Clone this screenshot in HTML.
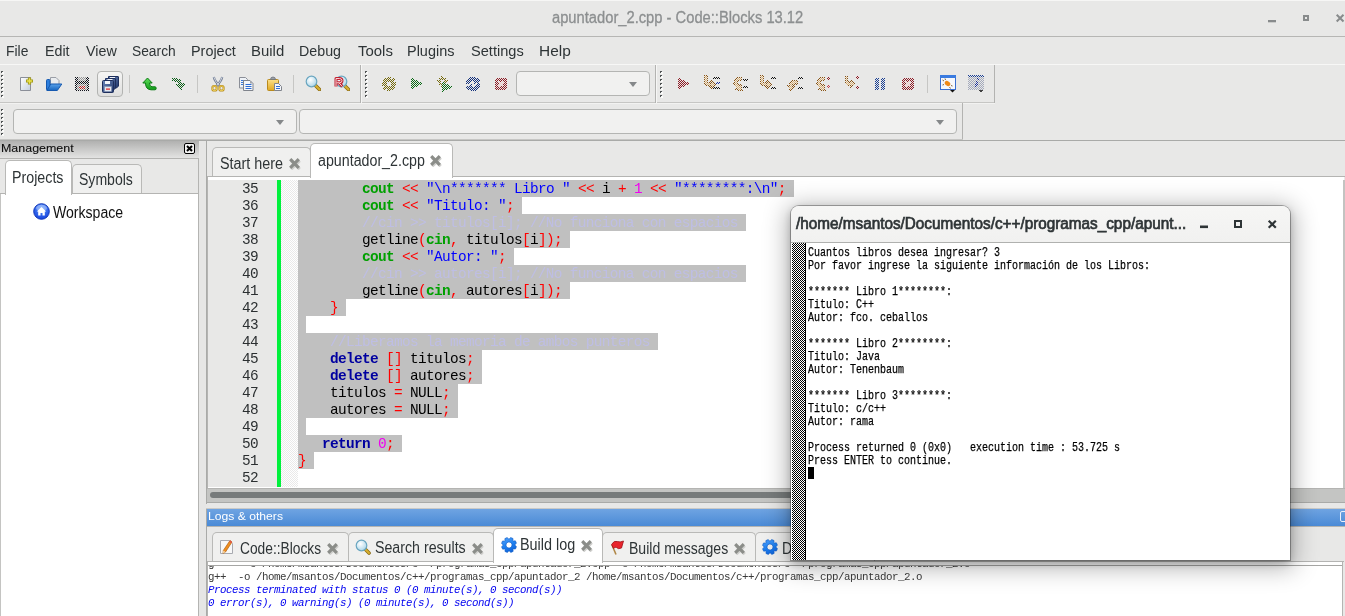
<!DOCTYPE html>
<html>
<head>
<meta charset="utf-8">
<title>apuntador_2.cpp - Code::Blocks 13.12</title>
<style>
html,body{margin:0;padding:0;}
body{width:1345px;height:616px;overflow:hidden;position:relative;background:#e8e8e7;font-family:"Liberation Sans",sans-serif;font-size:14.5px;color:#2e3436;}
.abs{position:absolute;}
.t{position:absolute;white-space:pre;line-height:1;}
/* title bar */
#titlebar{left:0;top:0;width:1345px;height:36px;background:#e8e8e7;border-top:1px solid #f6f6f5;box-sizing:border-box;}
#titlesep{left:0;top:36px;width:1345px;height:1px;background:#b6b6b4;}
/* menu */
#menubar{left:0;top:37px;width:1345px;height:27px;background:#e8e8e7;}
.mi{position:absolute;white-space:pre;line-height:1;font-size:15.4px;color:#2e3436;transform-origin:0 0;}
/* toolbars */
.tbline-l{background:#f7f7f6;height:1px;}
.tbline-d{background:#b9b9b7;height:1px;}
.grip{position:absolute;width:3px;background-image:repeating-linear-gradient(to bottom,#55595a 0,#55595a 1px,transparent 1px,transparent 3px);}
.combo{position:absolute;box-sizing:border-box;border:1px solid #b4b5b3;border-radius:4px;background:#f1f1f0;}
.combo:after{content:"";position:absolute;right:12px;top:50%;margin-top:-2px;border-left:4px solid transparent;border-right:4px solid transparent;border-top:5px solid #85888a;}
.ic{position:absolute;width:16px;height:16px;}
.vsep{position:absolute;width:1px;background:#c6c6c4;}
/* editor */
#code, #lnums{font-family:"Liberation Mono",monospace;font-size:14.4px;letter-spacing:-0.64px;}
.ln{position:absolute;left:0;width:100%;height:17px;line-height:19px;white-space:pre;}
.sel{position:absolute;left:0;top:0;height:17px;background:#c0c0c0;}
.k{color:#0000a0;font-weight:bold;}
.g{color:#00a000;font-weight:bold;}
.o{color:#ff0000;}
.s{color:#0000ff;}
.n{color:#f000f0;}
.c{color:#bebee4;}
.x{position:relative;}
.ui{font-size:15.6px;transform:scaleX(0.92);transform-origin:0 0;color:#2e3436;}
/* tabs */
.tab{position:absolute;box-sizing:border-box;border:1px solid #b9b9b7;border-bottom:none;border-radius:5px 5px 0 0;background:#f0f0ef;}
.tab.act{background:#ffffff;}
.lg{position:absolute;left:0;white-space:pre;font-family:"Liberation Mono",monospace;font-size:10.8px;letter-spacing:-0.48px;line-height:13px;height:13px;}
/* terminal */
#term{left:791px;top:206px;width:499px;height:354px;border-radius:8px 8px 0 0;background:#f4f4f3;box-shadow:0 0 0 1px rgba(0,0,0,0.30),0 3px 9px 0 rgba(0,0,0,0.22),0 4px 24px 4px rgba(0,0,0,0.30);overflow:hidden;}
#termtext{font-family:"Liberation Mono",monospace;font-size:13px;line-height:13px;color:#000;white-space:pre;transform:scaleX(0.7692);transform-origin:0 0;-webkit-text-stroke:0.25px #000;}
</style>
</head>
<body>
<div id="root" style="position:absolute;left:0;top:0;width:1345px;height:616px;will-change:transform;">
<!-- TITLE BAR -->
<div id="titlebar" class="abs"></div>
<div class="t" id="ttl" style="left:552.0px;top:10.1px;font-size:16px;color:#8c8f90;-webkit-text-stroke:0.3px #8c8f90;transform:scaleX(0.920);transform-origin:0 0;">apuntador_2.cpp - Code::Blocks 13.12</div>
<svg class="abs" style="left:1260px;top:8px" width="85" height="22" viewBox="0 0 85 22">
 <rect x="8" y="12" width="8" height="2.300" fill="#888b8c"/>
 <rect x="44" y="8" width="4" height="4" fill="none" stroke="#888b8c" stroke-width="2"/>
 <path d="M76.700 6.700 L83.500 13.500 M83.500 6.700 L76.700 13.500" stroke="#888b8c" stroke-width="2" fill="none"/>
</svg>
<div id="titlesep" class="abs"></div>

<!-- MENU BAR -->
<div id="menubar" class="abs">
 <span class="mi" id="m1" style="left:5.9px;top:6px;transform:scaleX(0.901);transform-origin:0 0;">File</span>
 <span class="mi" id="m2" style="left:44.5px;top:6px;transform:scaleX(0.926);transform-origin:0 0;">Edit</span>
 <span class="mi" id="m3" style="left:85.6px;top:6px;transform:scaleX(0.928);transform-origin:0 0;">View</span>
 <span class="mi" id="m4" style="left:132.0px;top:6px;transform:scaleX(0.896);transform-origin:0 0;">Search</span>
 <span class="mi" id="m5" style="left:191.1px;top:6px;transform:scaleX(0.936);transform-origin:0 0;">Project</span>
 <span class="mi" id="m6" style="left:251.0px;top:6px;transform:scaleX(0.970);transform-origin:0 0;">Build</span>
 <span class="mi" id="m7" style="left:299.3px;top:6px;transform:scaleX(0.926);transform-origin:0 0;">Debug</span>
 <span class="mi" id="m8" style="left:358.0px;top:6px;transform:scaleX(0.972);transform-origin:0 0;">Tools</span>
 <span class="mi" id="m9" style="left:407.1px;top:6px;transform:scaleX(0.939);transform-origin:0 0;">Plugins</span>
 <span class="mi" id="m10" style="left:471.0px;top:6px;transform:scaleX(0.947);transform-origin:0 0;">Settings</span>
 <span class="mi" id="m11" style="left:539.0px;top:6px;transform:scaleX(1.002);transform-origin:0 0;">Help</span>
</div>
<div class="abs tbline-l" style="left:0;top:64px;width:1345px;"></div>

<!--TOOLBARS-START-->
<!-- shared svg defs -->
<svg width="0" height="0" style="position:absolute">
 <defs>
  <pattern id="chk" width="2" height="2" patternUnits="userSpaceOnUse"><rect x="0" y="0" width="1" height="1" fill="#fff"/><rect x="1" y="1" width="1" height="1" fill="#fff"/></pattern>
  <mask id="stip" maskUnits="userSpaceOnUse" x="0" y="0" width="16" height="16"><rect width="16" height="16" fill="url(#chk)"/></mask>
  <linearGradient id="gPage" x1="0" y1="0" x2="1" y2="1"><stop offset="0" stop-color="#ffffff"/><stop offset="1" stop-color="#c3cfde"/></linearGradient>
  <linearGradient id="gBlue" x1="0" y1="0" x2="0" y2="1"><stop offset="0" stop-color="#5aa2ea"/><stop offset="1" stop-color="#1564c0"/></linearGradient>
  <linearGradient id="gGreen" x1="0" y1="0" x2="0" y2="1"><stop offset="0" stop-color="#5fe05a"/><stop offset="1" stop-color="#109a18"/></linearGradient>
  <linearGradient id="gGold" x1="0" y1="0" x2="0" y2="1"><stop offset="0" stop-color="#fbe08a"/><stop offset="1" stop-color="#e0a820"/></linearGradient>
  <radialGradient id="gLens" cx="0.4" cy="0.35" r="0.7"><stop offset="0" stop-color="#ffffff"/><stop offset="1" stop-color="#a8d4e8"/></radialGradient>
  <linearGradient id="gNavy" x1="0" y1="0" x2="1" y2="1"><stop offset="0" stop-color="#6e88bb"/><stop offset="1" stop-color="#1d3468"/></linearGradient>
  <radialGradient id="gHome" cx="0.5" cy="0.3" r="0.8"><stop offset="0" stop-color="#5e9bff"/><stop offset="1" stop-color="#0a34d8"/></radialGradient>
  <linearGradient id="gGear" x1="0" y1="0" x2="1" y2="1"><stop offset="0" stop-color="#58a8ff"/><stop offset="0.5" stop-color="#1e80f0"/><stop offset="1" stop-color="#0a58d0"/></linearGradient>
  <linearGradient id="gBtn" x1="0" y1="0" x2="0" y2="1"><stop offset="0" stop-color="#f6f6f5"/><stop offset="1" stop-color="#dededd"/></linearGradient>
 </defs>
</svg>

<!-- TOOLBAR ROW 1 -->
<div class="abs" style="left:0;top:102px;width:995px;height:1px;background:#c6c6c4;"></div>
<div class="abs" style="left:0;top:103px;width:995px;height:1px;background:#f2f2f1;"></div>
<div class="abs" style="left:360px;top:65px;width:1px;height:38px;background:#b3b3b1;"></div>
<div class="abs" style="left:361px;top:65px;width:1px;height:38px;background:#f6f6f5;"></div>
<div class="abs" style="left:655px;top:65px;width:1px;height:38px;background:#b3b3b1;"></div>
<div class="abs" style="left:656px;top:65px;width:1px;height:38px;background:#f6f6f5;"></div>
<div class="abs" style="left:994px;top:65px;width:1px;height:38px;background:#b3b3b1;"></div>
<!-- grips -->
<svg class="abs" style="left:1px;top:71px" width="5" height="28"><g id="gripdots"><g id="gd"><rect x="1" y="1" width="2" height="2" fill="#fbfbfa"/><rect x="0" y="0" width="2" height="1" fill="#4f5354"/><rect x="0" y="1" width="1" height="1" fill="#4f5354"/></g><use href="#gd" y="4"/><use href="#gd" y="8"/><use href="#gd" y="12"/><use href="#gd" y="16"/><use href="#gd" y="20"/><use href="#gd" y="24"/></g></svg>
<svg class="abs" style="left:365px;top:71px" width="5" height="28"><use href="#gripdots"/></svg>
<svg class="abs" style="left:660px;top:71px" width="5" height="28"><use href="#gripdots"/></svg>
<svg class="abs" style="left:1px;top:109px" width="5" height="28"><use href="#gripdots"/></svg>

<!-- main toolbar icons -->
<!-- new -->
<svg class="ic" style="left:18px;top:76px" viewBox="0 0 16 16"><path d="M2.500 1.500h10v13h-10z" fill="url(#gPage)" stroke="#8b8f98" stroke-width="1"/><path d="M11.500 1.500v7M8 5h7" stroke="#9c9414" stroke-width="3.200"/><path d="M11.500 2.300v5.400M8.800 5h5.400" stroke="#ece44e" stroke-width="1.500"/></svg>
<!-- open -->
<svg class="ic" style="left:46px;top:76px" viewBox="0 0 16 16"><path d="M4.5 1.500h5.500l3 3v6h-8.500z" fill="#e9ecef" stroke="#9a9ea6" stroke-width="1"/><path d="M0.500 4.500q0-1 1-1h1.500q1 0 1 1v9h-3.500z" fill="#2d7fdd" stroke="#1559b0"/><path d="M0.800 14.500l4-6.500h11l-4.500 6.500z" fill="url(#gBlue)" stroke="#1559b0" stroke-width="1" stroke-linejoin="round"/></svg>
<!-- save (disabled) -->
<svg class="ic" style="left:74px;top:76px;shape-rendering:crispEdges" viewBox="0 0 16 16"><g mask="url(#stip)"><rect x="1" y="1" width="14" height="14" rx="1" fill="#10121c"/><rect x="4" y="1" width="8" height="4" fill="#9a9a9a"/><rect x="3" y="8" width="10" height="6" fill="#8c8c8c"/><rect x="5" y="10" width="6" height="3" fill="#c02020"/></g></svg>
<!-- save all (pressed button) -->
<div class="abs" style="left:97px;top:71px;width:26px;height:26px;box-sizing:border-box;border:1px solid #b2b3b1;border-radius:4px;background:linear-gradient(#f5f5f4,#dfdfde);"></div>
<svg class="ic" style="left:102px;top:76px;width:17px;height:17px" viewBox="0 0 17 17"><path d="M6.500 0.500h9.500q0.500 0 0.500 0.500v9l-2 2h-8z" fill="url(#gNavy)" stroke="#1d2e5c"/><rect x="8" y="1" width="5" height="1.500" fill="#eef2f8"/><path d="M3.500 2.500h9.500q0.500 0 0.500 0.500v9l-2 2h-8z" fill="url(#gNavy)" stroke="#1d2e5c"/><rect x="5.500" y="3" width="5" height="1.500" fill="#eef2f8"/><path d="M0.500 5.500q0-1 1-1h9q1 0 1 1v10q0 1 -1 1h-9q-1 0 -1-1z" fill="url(#gNavy)" stroke="#1d2e5c"/><rect x="3" y="5" width="5" height="3" fill="#f2f5fa"/><rect x="2.500" y="10.500" width="7" height="5" fill="#e4e8f0" stroke="#8090b0" stroke-width="0.600"/><rect x="4" y="12.500" width="4" height="1.200" fill="#e02020"/></svg>
<div class="vsep" style="left:129px;top:75px;height:18px;"></div>
<!-- undo -->
<svg class="ic" style="left:141px;top:76px" viewBox="0 0 16 16"><path d="M6.500 2 L1.800 7 H4.500 Q4.500 13.500 10 13.800 H14 Q15.200 13.800 15.200 12.300 Q15.200 10.800 14 10.800 H11 Q8.500 10.500 8.500 7 H11.200 Z" fill="url(#gGreen)" stroke="#0c7a14" stroke-width="1" stroke-linejoin="round"/></svg>
<!-- redo (disabled) -->
<svg class="ic" style="left:170px;top:76px;shape-rendering:crispEdges" viewBox="0 0 16 16"><g mask="url(#stip)"><path d="M2 3.500 Q9.500 3 11 9" fill="none" stroke="#0c5e18" stroke-width="3.600"/><path d="M5.500 8.500 L15.500 7 L11 14.500 Z" fill="#0c5e18"/></g></svg>
<div class="vsep" style="left:197px;top:75px;height:18px;"></div>
<!-- cut -->
<svg class="ic" style="left:210px;top:76px" viewBox="0 0 16 16"><path d="M3.800 1 Q4.500 5 10.500 11 M12.200 1 Q11.500 5 5.500 11" fill="none" stroke="#6f7b90" stroke-width="2.200"/><path d="M3.800 1 Q4.500 5 10.500 11 M12.200 1 Q11.500 5 5.500 11" fill="none" stroke="#e4e9f2" stroke-width="0.800"/><rect x="2.400" y="10" width="4.200" height="4.600" rx="1.600" fill="#e8e8e7" stroke="#b48a1a" stroke-width="2"/><rect x="9.400" y="10" width="4.200" height="4.600" rx="1.600" fill="#e8e8e7" stroke="#b48a1a" stroke-width="2"/><rect x="2.400" y="10" width="4.200" height="4.600" rx="1.600" fill="none" stroke="#f2d25c" stroke-width="0.900"/><rect x="9.400" y="10" width="4.200" height="4.600" rx="1.600" fill="none" stroke="#f2d25c" stroke-width="0.900"/></svg>
<!-- copy -->
<svg class="ic" style="left:238px;top:76px" viewBox="0 0 16 16"><path d="M1.500 1.500h6l2 2v8.500h-8z" fill="#eef2f7" stroke="#8b8f98"/><path d="M3 4.500h4M3 6.500h4M3 8.500h4" stroke="#3a78d8" stroke-width="1"/><path d="M5.500 4.500h6.500l3 3v7h-9.500z" fill="#f4f6fa" stroke="#80848c"/><path d="M12 4.500v3h3z" fill="#a0a4ac"/><path d="M7.500 8.500h6M7.500 10.500h6M7.500 12.500h6" stroke="#2c6cd4" stroke-width="1.200"/></svg>
<!-- paste -->
<svg class="ic" style="left:266px;top:76px" viewBox="0 0 16 16"><rect x="1.500" y="3.500" width="11" height="11" rx="1" fill="url(#gGold)" stroke="#b98a1c"/><path d="M4.500 3.500 Q4.500 1 7 1 Q9.500 1 9.500 3.500 Z" fill="#9aa0a8" stroke="#6e747c" stroke-width="0.800"/><path d="M8.500 7.500h4l3 3v4h-7z" fill="#f4f6fa" stroke="#80848c"/><path d="M10 10.500h4M10 12.500h4" stroke="#2c6cd4" stroke-width="1.200"/></svg>
<div class="vsep" style="left:293px;top:75px;height:18px;"></div>
<!-- find -->
<svg class="ic" style="left:305px;top:75px" viewBox="0 0 16 16"><path d="M9.500 9.500 L14.500 14.500" stroke="#8a6a12" stroke-width="3.600" stroke-linecap="round"/><path d="M9.500 9.500 L14.500 14.500" stroke="#d8b030" stroke-width="2" stroke-linecap="round"/><circle cx="6.500" cy="6.500" r="5.300" fill="url(#gLens)" stroke="#6aa6c0" stroke-width="1.200"/></svg>
<!-- replace -->
<svg class="ic" style="left:334px;top:75px" viewBox="0 0 16 16"><path d="M10.500 10.500 L14.500 14.500" stroke="#8a6a12" stroke-width="3.600" stroke-linecap="round"/><path d="M10.500 10.500 L14.500 14.500" stroke="#d8b030" stroke-width="2" stroke-linecap="round"/><circle cx="7.500" cy="6.500" r="5.300" fill="url(#gLens)" stroke="#6aa6c0" stroke-width="1.200"/><path d="M2 11.500 V3.500 H5.500 Q8 3.500 8 5.700 Q8 7.800 5.500 7.800 H2.500 M5 7.800 L8.300 11.500" fill="none" stroke="#c02030" stroke-width="3" stroke-linejoin="round"/><path d="M2 11.500 V3.500 H5.500 Q8 3.500 8 5.700 Q8 7.800 5.500 7.800 H2.500 M5 7.800 L8.300 11.500" fill="none" stroke="#f8d0d4" stroke-width="1" stroke-linejoin="round"/></svg>

<!-- compiler toolbar (disabled icons) -->
<svg class="ic" style="left:381px;top:76px;shape-rendering:crispEdges" viewBox="0 0 16 16"><g mask="url(#stip)"><path d="M13.50 6.15 L15.49 6.69 L15.49 9.31 L13.50 9.85 L13.19 10.58 L14.22 12.37 L12.37 14.22 L10.58 13.19 L9.85 13.50 L9.31 15.49 L6.69 15.49 L6.15 13.50 L5.42 13.19 L3.63 14.22 L1.78 12.37 L2.81 10.58 L2.50 9.85 L0.51 9.31 L0.51 6.69 L2.50 6.15 L2.81 5.42 L1.78 3.63 L3.63 1.78 L5.42 2.81 L6.15 2.50 L6.69 0.51 L9.31 0.51 L9.85 2.50 L10.58 2.81 L12.37 1.78 L14.22 3.63 L13.19 5.42 Z M8.00 5.80 a2.20 2.20 0 1 0 0.01 0 Z" fill="#766a0c" fill-rule="evenodd"/></g></svg>
<svg class="ic" style="left:408px;top:76px;shape-rendering:crispEdges" viewBox="0 0 16 16"><g mask="url(#stip)"><path d="M2.500 1 L14.500 7.500 L2.500 14 Z" fill="#0a6a16"/></g></svg>
<svg class="ic" style="left:437px;top:76px;shape-rendering:crispEdges" viewBox="0 0 16 16"><g mask="url(#stip)"><path d="M9.29 4.23 L10.82 4.57 L10.82 6.43 L9.29 6.77 L9.08 7.28 L9.92 8.61 L8.61 9.92 L7.28 9.08 L6.77 9.29 L6.43 10.82 L4.57 10.82 L4.23 9.29 L3.72 9.08 L2.39 9.92 L1.08 8.61 L1.92 7.28 L1.71 6.77 L0.18 6.43 L0.18 4.57 L1.71 4.23 L1.92 3.72 L1.08 2.39 L2.39 1.08 L3.72 1.92 L4.23 1.71 L4.57 0.18 L6.43 0.18 L6.77 1.71 L7.28 1.92 L8.61 1.08 L9.92 2.39 L9.08 3.72 Z M5.50 4.00 a1.50 1.50 0 1 0 0.01 0 Z" fill="#766a0c" fill-rule="evenodd"/><path d="M5 5.500 L16 11 L5 16 Z" fill="#0a6a16"/></g></svg>
<svg class="ic" style="left:465px;top:76px;shape-rendering:crispEdges" viewBox="0 0 16 16"><g mask="url(#stip)"><path d="M2.500 8.500 A5.500 5.500 0 0 1 11.500 4" fill="none" stroke="#12307c" stroke-width="3.800"/><path d="M8.500 0.500 L15.500 4.500 L9.500 8.500 Z" fill="#12307c"/><path d="M13.500 7.500 A5.500 5.500 0 0 1 4.500 12" fill="none" stroke="#12307c" stroke-width="3.800"/><path d="M7.500 15.500 L0.500 11.500 L6.500 7.500 Z" fill="#12307c"/></g></svg>
<svg class="ic" style="left:493px;top:76px;shape-rendering:crispEdges" viewBox="0 0 16 16"><g mask="url(#stip)"><rect x="2" y="2" width="12" height="12" rx="2.500" fill="#8e1a24"/><path d="M5.500 5.500 L10.500 10.500 M10.500 5.500 L5.500 10.500" stroke="#f0c8c8" stroke-width="1.800"/></g></svg>
<div class="combo" style="left:516px;top:71px;width:134px;height:25px;"></div>

<!-- debugger toolbar -->
<svg class="ic" style="left:675px;top:76px;shape-rendering:crispEdges" viewBox="0 0 16 16"><g mask="url(#stip)"><path d="M3 1.500 L14.500 7.500 L3 13.500 Z" fill="#8e1a24"/></g></svg>
<svg class="ic" style="left:704px;top:75px;shape-rendering:crispEdges" viewBox="0 0 16 16"><g mask="url(#stip)"><path d="M0.500 0.500 h3 v5.500 q0 2 2 2 h1.500 v-2.500 l4.500 4 -4.500 4 v-2.500 h-2.500 q-4 0 -4 -4.500 z" fill="#dcb070" stroke="#8a5414" stroke-width="1.200" stroke-linejoin="round"/><rect x="9" y="2" width="7" height="2" fill="#101010"/><rect x="12" y="7" width="4" height="2" fill="#1a2f9a"/><rect x="9" y="12" width="7" height="2" fill="#101010"/></g></svg>
<svg class="ic" style="left:732px;top:76px;shape-rendering:crispEdges" viewBox="0 0 16 16"><g mask="url(#stip)"><path d="M9.500 1 L9.500 4 Q5.500 4 5.500 7 Q5.500 8.500 7 9.500 L9 8 L10 14.500 L3 13.500 L5 11.800 Q2 10 2 7 Q2 1.500 9.500 1 Z" fill="#dcb070" stroke="#8a5414" stroke-width="1.200" stroke-linejoin="round"/><rect x="11" y="3" width="5" height="2" fill="#101010"/><rect x="11" y="10" width="5" height="2" fill="#101010"/></g></svg>
<svg class="ic" style="left:760px;top:75px;shape-rendering:crispEdges" viewBox="0 0 16 16"><g mask="url(#stip)"><path d="M0.500 0.500 h3 v5.500 q0 2 2 2 h1.500 v-2.500 l4.500 4 -4.500 4 v-2.500 h-2.500 q-4 0 -4 -4.500 z" fill="#dcb070" stroke="#8a5414" stroke-width="1.200" stroke-linejoin="round"/><rect x="11" y="2" width="5" height="2" fill="#101010"/><rect x="11" y="12" width="5" height="2" fill="#101010"/></g></svg>
<svg class="ic" style="left:787px;top:75px;shape-rendering:crispEdges" viewBox="0 0 16 16"><g mask="url(#stip)"><path d="M10.500 5.500 v3.500 h-3 q-2 0 -2 2 h2.500 l-4 4.500 -3.500 -4.500 h2 q0 -5.500 5.500 -5.500 z" fill="#dcb070" stroke="#8a5414" stroke-width="1.200" stroke-linejoin="round"/><rect x="11" y="2" width="5" height="2" fill="#101010"/><rect x="11" y="12" width="5" height="2" fill="#101010"/></g></svg>
<svg class="ic" style="left:815px;top:76px;shape-rendering:crispEdges" viewBox="0 0 16 16"><g mask="url(#stip)"><path d="M9.500 1 L9.500 4 Q5.500 4 5.500 7 Q5.500 8.500 7 9.500 L9 8 L10 14.500 L3 13.500 L5 11.800 Q2 10 2 7 Q2 1.500 9.500 1 Z" fill="#dcb070" stroke="#8a5414" stroke-width="1.200" stroke-linejoin="round"/><path d="M13.500 1 l2 2 -2 2 -2-2z" fill="#8e1a24"/><rect x="12" y="9" width="3" height="3" fill="#c04048"/></g></svg>
<svg class="ic" style="left:844px;top:75px;shape-rendering:crispEdges" viewBox="0 0 16 16"><g mask="url(#stip)"><path d="M0.500 0.500 h3 v5.500 q0 2 2 2 h1.500 v-2.500 l4.500 4 -4.500 4 v-2.500 h-2.500 q-4 0 -4 -4.500 z" fill="#dcb070" stroke="#8a5414" stroke-width="1.200" stroke-linejoin="round" transform="translate(1,1) scale(0.850)"/><path d="M13 1 l1.800 1.800 -1.800 1.800 -1.800-1.800z M13 11 l1.800 1.800 -1.800 1.800 -1.800-1.800z" fill="#8e1a24"/></g></svg>
<svg class="ic" style="left:872px;top:76px;shape-rendering:crispEdges" viewBox="0 0 16 16"><g mask="url(#stip)"><rect x="3" y="2" width="4" height="12" fill="#1a3f94"/><rect x="9" y="2" width="4" height="12" fill="#1a3f94"/></g></svg>
<svg class="ic" style="left:900px;top:76px;shape-rendering:crispEdges" viewBox="0 0 16 16"><g mask="url(#stip)"><rect x="2" y="2" width="12" height="12" rx="2.500" fill="#8e1a24"/><path d="M5.500 5.500 L10.500 10.500 M10.500 5.500 L5.500 10.500" stroke="#f0c8c8" stroke-width="1.800"/></g></svg>
<div class="vsep" style="left:927px;top:75px;height:18px;"></div>
<svg class="ic" style="left:940px;top:75px;height:18px" viewBox="0 0 16 18"><rect x="0.500" y="0.500" width="15" height="14" fill="#f6f8fc" stroke="#3a6fd0"/><rect x="0" y="0" width="16" height="3" fill="#3a7be0"/><ellipse cx="7.500" cy="8.500" rx="3" ry="2.200" fill="#f08a18" transform="rotate(35 7.500 8.500)"/><path d="M4 6 l-1.500-1 M5.500 5 l-0.500-1.500 M9.500 12 l1 1.500 M11 10.500 l1.500 0.500 M4 9.500 l-1.500 0.500" stroke="#604010" stroke-width="0.800"/><path d="M10 15 h5 l-2.500 2.500z" fill="#101010"/></svg>
<svg class="ic" style="left:968px;top:75px;height:18px;shape-rendering:crispEdges" viewBox="0 0 16 18"><g mask="url(#stip)"><rect x="0" y="0" width="16" height="15" fill="#a4aabc"/><rect x="0" y="0" width="16" height="2" fill="#1a3f94"/><path d="M9 3h2v2h-2z M8 6h2.500l-1.500 6h-2.500z" fill="#1a2f9a"/></g><path d="M10 15 h5 l-2.500 2.500z" fill="#404040"/></svg>

<!-- TOOLBAR ROW 2 -->
<div class="combo" style="left:13px;top:109px;width:284px;height:25px;"></div>
<div class="combo" style="left:299px;top:109px;width:658px;height:25px;"></div>
<div class="abs" style="left:962px;top:103px;width:1px;height:36px;background:#b3b3b1;"></div>
<div class="abs" style="left:0;top:139px;width:963px;height:1px;background:#c6c6c4;"></div>
<div class="abs" style="left:0;top:140px;width:1345px;height:1px;background:#a9aaa8;"></div>
<!--TOOLBARS-END-->
<!--MAIN-START-->
<!-- MANAGEMENT PANEL -->
<div class="abs" style="left:0;top:141px;width:199px;height:17px;background:linear-gradient(#b1b1b0,#e3e3e2);"></div>
<div class="abs" style="left:0;top:158px;width:199px;height:1px;background:#b4b4b2;"></div>
<div class="t" id="mgmt" style="left:0.6px;top:143.3px;font-size:11.800px;color:#0c0c0c;-webkit-text-stroke:0.1px #111;transform:scaleX(1.055);transform-origin:0 0;">Management</div>
<svg class="abs" style="left:184px;top:143px" width="11" height="11" viewBox="0 0 11 11"><rect x="0.500" y="0.500" width="10" height="10" rx="1.500" fill="#f4f4f3" stroke="#000"/><path d="M3 3 L8 8 M8 3 L3 8" stroke="#000" stroke-width="2"/></svg>
<div class="abs" style="left:198px;top:159px;width:1px;height:457px;background:#b4b4b2;"></div>
<div class="abs" style="left:0;top:194px;width:198px;height:422px;background:#fff;"></div>
<div class="abs" style="left:0;top:193px;width:198px;height:1px;background:#b4b4b2;"></div>
<div class="abs" style="left:0;top:194px;width:1px;height:422px;background:#c4c4c2;"></div>
<div class="tab" style="left:72px;top:164px;width:70px;height:29px;"></div>
<div class="tab act" style="left:5px;top:160px;width:67px;height:35px;"></div>
<div class="t ui" id="tprojects" style="left:11.7px;top:169.6px;transform:scaleX(0.914);transform-origin:0 0;">Projects</div>
<div class="t ui" id="tsymbols" style="left:79.0px;top:172.4px;transform:scaleX(0.901);transform-origin:0 0;">Symbols</div>
<svg class="abs" style="left:33px;top:203px" width="17" height="17" viewBox="0 0 17 17"><circle cx="8.500" cy="8.500" r="7.800" fill="url(#gHome)" stroke="#1238b8" stroke-width="1"/><ellipse cx="8.500" cy="5" rx="5.500" ry="3.200" fill="#ffffff" opacity="0.350"/><path d="M8.500 4 L3.800 8.500 H5.200 V12.500 H7.500 V10 H9.500 V12.500 H11.800 V8.500 H13.200 Z" fill="#fff"/></svg>
<div class="t ui" id="tworkspace" style="left:53.4px;top:204.8px;color:#111;transform:scaleX(0.902);transform-origin:0 0;">Workspace</div>
<!-- SASH -->
<div class="abs" style="left:199px;top:141px;width:7px;height:475px;background:#e6e6e5;"></div>
<div class="abs" style="left:206px;top:141px;width:1px;height:363px;background:#a9aaa8;"></div>
<!-- EDITOR NOTEBOOK -->
<div class="abs" style="left:207px;top:176px;width:1138px;height:1px;background:#b4b4b2;"></div>
<div class="abs" style="left:208px;top:177px;width:1136px;height:311px;background:#fff;"></div>
<div class="abs" style="left:207px;top:176px;width:1px;height:312px;background:#b4b4b2;"></div>
<div class="abs" style="left:1343px;top:180px;width:2px;height:308px;background:#c3c3c1;"></div>
<div class="tab" style="left:212px;top:147px;width:99px;height:29px;"></div>
<div class="tab act" style="left:310px;top:143px;width:143px;height:35px;"></div>
<div class="t ui" id="tstart" style="left:220.1px;top:155.8px;transform:scaleX(0.921);transform-origin:0 0;">Start here</div>
<div class="t ui" id="tapunt" style="left:318.4px;top:152.6px;transform:scaleX(0.913);transform-origin:0 0;">apuntador_2.cpp</div>
<svg class="abs" style="left:288px;top:157px" width="13" height="13" viewBox="0 0 13 13"><path d="M2.200 2.700 L10.800 11.300 M10.800 2.700 L2.200 11.300" stroke="#cfcfcd" stroke-width="3.200" transform="translate(0.900,0.900)"/><path d="M2.200 2.200 L10.800 10.800 M10.800 2.200 L2.200 10.800" stroke="#8b8d89" stroke-width="3.200"/></svg>
<svg class="abs" style="left:429px;top:154px" width="13" height="13" viewBox="0 0 13 13"><path d="M2.200 2.700 L10.800 11.300 M10.800 2.700 L2.200 11.300" stroke="#cfcfcd" stroke-width="3.200" transform="translate(0.900,0.900)"/><path d="M2.200 2.200 L10.800 10.800 M10.800 2.200 L2.200 10.800" stroke="#8b8d89" stroke-width="3.200"/></svg>
<!-- editor margins -->
<div class="abs" style="left:208px;top:180px;width:69px;height:307px;background:#e8e8e7;"></div>
<div class="abs" style="left:277px;top:180px;width:4px;height:307px;background:#00f03c;"></div>
<div class="abs" style="left:281px;top:180px;width:17px;height:307px;background:#f3f3f3;background-image:linear-gradient(45deg,#e9e9e9 25%,transparent 25%,transparent 75%,#e9e9e9 75%),linear-gradient(45deg,#e9e9e9 25%,transparent 25%,transparent 75%,#e9e9e9 75%);background-size:2px 2px;background-position:0 0,1px 1px;background-color:#fff;"></div>
<div class="abs" id="lnums" style="left:208px;top:180px;width:50px;height:307px;color:#2b2f31;">
<div class="ln" style="top:0px;text-align:right;">35</div>
<div class="ln" style="top:17px;text-align:right;">36</div>
<div class="ln" style="top:34px;text-align:right;">37</div>
<div class="ln" style="top:51px;text-align:right;">38</div>
<div class="ln" style="top:68px;text-align:right;">39</div>
<div class="ln" style="top:85px;text-align:right;">40</div>
<div class="ln" style="top:102px;text-align:right;">41</div>
<div class="ln" style="top:119px;text-align:right;">42</div>
<div class="ln" style="top:136px;text-align:right;">43</div>
<div class="ln" style="top:153px;text-align:right;">44</div>
<div class="ln" style="top:170px;text-align:right;">45</div>
<div class="ln" style="top:187px;text-align:right;">46</div>
<div class="ln" style="top:204px;text-align:right;">47</div>
<div class="ln" style="top:221px;text-align:right;">48</div>
<div class="ln" style="top:238px;text-align:right;">49</div>
<div class="ln" style="top:255px;text-align:right;">50</div>
<div class="ln" style="top:272px;text-align:right;">51</div>
<div class="ln" style="top:289px;text-align:right;">52</div>
</div>
<div class="abs" id="code" style="left:298px;top:180px;width:1045px;height:307px;color:#000;">
<div class="ln" style="top:0px"><div class="sel" style="width:496px"></div><span class="x">        <span class="g">cout</span> <span class="o">&lt;&lt;</span> <span class="s">"\n******* Libro "</span> <span class="o">&lt;&lt;</span> i <span class="o">+</span> <span class="n">1</span> <span class="o">&lt;&lt;</span> <span class="s">"********:\n"</span><span class="o">;</span></span></div>
<div class="ln" style="top:17px"><div class="sel" style="width:224px"></div><span class="x">        <span class="g">cout</span> <span class="o">&lt;&lt;</span> <span class="s">"Titulo: "</span><span class="o">;</span></span></div>
<div class="ln" style="top:34px"><div class="sel" style="width:448px"></div><span class="x"><span class="c">        //cin &gt;&gt; titulos[i]; //No funciona con espacios</span></span></div>
<div class="ln" style="top:51px"><div class="sel" style="width:272px"></div><span class="x">        getline<span class="o">(</span><span class="g">cin</span><span class="o">,</span> titulos<span class="o">[</span>i<span class="o">])</span><span class="o">;</span></span></div>
<div class="ln" style="top:68px"><div class="sel" style="width:216px"></div><span class="x">        <span class="g">cout</span> <span class="o">&lt;&lt;</span> <span class="s">"Autor: "</span><span class="o">;</span></span></div>
<div class="ln" style="top:85px"><div class="sel" style="width:448px"></div><span class="x"><span class="c">        //cin &gt;&gt; autores[i]; //No funciona con espacios</span></span></div>
<div class="ln" style="top:102px"><div class="sel" style="width:272px"></div><span class="x">        getline<span class="o">(</span><span class="g">cin</span><span class="o">,</span> autores<span class="o">[</span>i<span class="o">])</span><span class="o">;</span></span></div>
<div class="ln" style="top:119px"><div class="sel" style="width:48px"></div><span class="x">    <span class="o">}</span></span></div>
<div class="ln" style="top:136px"><div class="sel" style="width:8px"></div><span class="x"></span></div>
<div class="ln" style="top:153px"><div class="sel" style="width:360px"></div><span class="x"><span class="c">    //Liberamos la memoria de ambos punteros</span></span></div>
<div class="ln" style="top:170px"><div class="sel" style="width:184px"></div><span class="x">    <span class="k">delete</span> <span class="o">[]</span> titulos<span class="o">;</span></span></div>
<div class="ln" style="top:187px"><div class="sel" style="width:184px"></div><span class="x">    <span class="k">delete</span> <span class="o">[]</span> autores<span class="o">;</span></span></div>
<div class="ln" style="top:204px"><div class="sel" style="width:160px"></div><span class="x">    titulos <span class="o">=</span> NULL<span class="o">;</span></span></div>
<div class="ln" style="top:221px"><div class="sel" style="width:160px"></div><span class="x">    autores <span class="o">=</span> NULL<span class="o">;</span></span></div>
<div class="ln" style="top:238px"><div class="sel" style="width:8px"></div><span class="x"></span></div>
<div class="ln" style="top:255px"><div class="sel" style="width:104px"></div><span class="x">   <span class="k">return</span> <span class="n">0</span><span class="o">;</span></span></div>
<div class="ln" style="top:272px"><div class="sel" style="width:16px"></div><span class="x"><span class="o">}</span></span></div>
<div class="ln" style="top:289px"></div>
</div>
<!-- editor h-scrollbar -->
<div class="abs" style="left:207px;top:488px;width:1138px;height:14px;background:#c4c5c3;border-top:1px solid #b4b4b2;box-sizing:border-box;"></div>
<div class="abs" style="left:210px;top:492px;width:1070px;height:6px;border-radius:3px;background:#777b7b;"></div>
<div class="abs" style="left:206px;top:502px;width:1139px;height:1px;background:#a9aaa8;"></div>
<!--MAIN-END-->
<!--LOGS-START-->
<!-- LOGS & OTHERS -->
<div class="abs" style="left:207px;top:509px;width:1138px;height:17px;background:linear-gradient(#6fa4e2,#4a8ad6);"></div>
<div class="abs" style="left:206px;top:508px;width:1139px;height:1px;background:#c9c9c7;"></div>
<div class="abs" style="left:207px;top:526px;width:1138px;height:1px;background:#b4b4b2;"></div>
<div class="abs" style="left:206px;top:509px;width:1px;height:107px;background:#a9aaa8;"></div>
<div class="t" id="tlogs" style="left:208.4px;top:510.8px;font-size:11.800px;color:#fff;transform:scaleX(1.03);transform-origin:0 0;">Logs &amp; others</div>
<svg class="abs" style="left:1340px;top:511px" width="5" height="12"><rect x="0.500" y="0.500" width="10" height="10" rx="1.500" fill="none" stroke="#e8f0fb"/></svg>
<div class="abs" style="left:207px;top:561px;width:1137px;height:1px;background:#b4b4b2;"></div>
<div class="abs" style="left:207px;top:562px;width:1px;height:54px;background:#b4b4b2;"></div>
<div class="abs" style="left:208px;top:562px;width:1134px;height:54px;background:#fff;"></div>
<div class="abs" style="left:208px;top:565px;width:1134px;height:1px;background:#a6a6a4;"></div>
<div class="abs" style="left:208px;top:566px;width:1134px;height:50px;overflow:hidden;" id="logtext">
<div class="lg" style="top:-8px;color:#3a3a3a;">g++   -c /home/msantos/Documentos/c++/programas_cpp/apuntador_2.cpp -o /home/msantos/Documentos/c++/programas_cpp/apuntador_2.o</div>
<div class="lg" style="top:5px;color:#3a3a3a;">g++  -o /home/msantos/Documentos/c++/programas_cpp/apuntador_2 /home/msantos/Documentos/c++/programas_cpp/apuntador_2.o</div>
<div class="lg" style="top:18px;color:#0000f0;font-style:italic;">Process terminated with status 0 (0 minute(s), 0 second(s))</div>
<div class="lg" style="top:31px;color:#0000f0;font-style:italic;">0 error(s), 0 warning(s) (0 minute(s), 0 second(s))</div>
</div>
<div class="abs" style="left:1342px;top:562px;width:1px;height:54px;background:#b4b4b2;"></div>
<div class="tab" style="left:212px;top:532px;width:137px;height:29px;"></div>
<div class="tab" style="left:348px;top:532px;width:146px;height:29px;"></div>
<div class="tab" style="left:602px;top:532px;width:154px;height:29px;"></div>
<div class="tab" style="left:755px;top:532px;width:120px;height:29px;"></div>
<div class="tab act" style="left:493px;top:528px;width:110px;height:35px;"></div>
<svg class="abs" style="left:219px;top:539px" width="15" height="16" viewBox="0 0 15 16"><path d="M1.500 1.500h9l3 3v10h-12z" fill="#f8f8f8" stroke="#a8aab0"/><path d="M11 1.500 L13 3 L6.500 13 L4 14.500 L4.300 11.500 Z" fill="#f09020" stroke="#b05c10" stroke-width="0.700"/><path d="M4 14.500 L4.300 11.500 L6.500 13Z" fill="#f4dcb0"/><path d="M11 1.500 L13 3 L12.300 4.200 L10.300 2.700Z" fill="#e05050"/></svg>
<div class="t ui" id="tcb" style="left:239.8px;top:540.6px;transform:scaleX(0.883);transform-origin:0 0;">Code::Blocks</div>
<svg class="abs" style="left:326px;top:542px" width="13" height="13" viewBox="0 0 13 13"><path d="M2.200 2.700 L10.800 11.300 M10.800 2.700 L2.200 11.300" stroke="#cfcfcd" stroke-width="3.200" transform="translate(0.900,0.900)"/><path d="M2.200 2.200 L10.800 10.800 M10.800 2.200 L2.200 10.800" stroke="#8b8d89" stroke-width="3.200"/></svg>
<svg class="abs" style="left:355px;top:539px" width="16" height="16" viewBox="0 0 16 16"><path d="M9.500 9.500 L14 14" stroke="#8a6a12" stroke-width="3.600" stroke-linecap="round"/><path d="M9.500 9.500 L14 14" stroke="#d8b030" stroke-width="2" stroke-linecap="round"/><circle cx="6.500" cy="6.500" r="5.300" fill="url(#gLens)" stroke="#6aa6c0" stroke-width="1.200"/></svg>
<div class="t ui" id="tsr" style="left:375.2px;top:540.4px;transform:scaleX(0.910);transform-origin:0 0;">Search results</div>
<svg class="abs" style="left:471px;top:542px" width="13" height="13" viewBox="0 0 13 13"><path d="M2.200 2.700 L10.800 11.300 M10.800 2.700 L2.200 11.300" stroke="#cfcfcd" stroke-width="3.200" transform="translate(0.900,0.900)"/><path d="M2.200 2.200 L10.800 10.800 M10.800 2.200 L2.200 10.800" stroke="#8b8d89" stroke-width="3.200"/></svg>
<svg class="abs" style="left:501px;top:537px" width="16" height="16" viewBox="0 0 16 16"><path d="M13.69 6.09 L15.49 6.69 L15.49 9.31 L13.69 9.91 L13.37 10.67 L14.22 12.37 L12.37 14.22 L10.67 13.37 L9.91 13.69 L9.31 15.49 L6.69 15.49 L6.09 13.69 L5.33 13.37 L3.63 14.22 L1.78 12.37 L2.63 10.67 L2.31 9.91 L0.51 9.31 L0.51 6.69 L2.31 6.09 L2.63 5.33 L1.78 3.63 L3.63 1.78 L5.33 2.63 L6.09 2.31 L6.69 0.51 L9.31 0.51 L9.91 2.31 L10.67 2.63 L12.37 1.78 L14.22 3.63 L13.37 5.33 Z M8.00 5.00 a3.00 3.00 0 1 0 0.01 0 Z" fill="url(#gGear)" fill-rule="evenodd" stroke="#1560c8" stroke-width="0.600" stroke-linejoin="round" transform="rotate(22 8 8)"/></svg>
<div class="t ui" id="tbl" style="left:520.0px;top:537.4px;transform:scaleX(0.924);transform-origin:0 0;">Build log</div>
<svg class="abs" style="left:580px;top:539px" width="13" height="13" viewBox="0 0 13 13"><path d="M2.200 2.700 L10.800 11.300 M10.800 2.700 L2.200 11.300" stroke="#cfcfcd" stroke-width="3.200" transform="translate(0.900,0.900)"/><path d="M2.200 2.200 L10.800 10.800 M10.800 2.200 L2.200 10.800" stroke="#8b8d89" stroke-width="3.200"/></svg>
<svg class="abs" style="left:610px;top:539px" width="15" height="17" viewBox="0 0 15 17"><path d="M2 6 L6 15.500" stroke="#b08848" stroke-width="1.600"/><path d="M1.500 5.500 Q4 1 7.500 2.500 Q10 3.500 13.500 2 L11.500 9 Q8 10.500 6.500 8.500 Q5 7.500 3.500 9.500 Z" fill="#e8242c" stroke="#a01018" stroke-width="0.800"/></svg>
<div class="t ui" id="tbm" style="left:629.1px;top:540.6px;transform:scaleX(0.901);transform-origin:0 0;">Build messages</div>
<svg class="abs" style="left:733px;top:542px" width="13" height="13" viewBox="0 0 13 13"><path d="M2.200 2.700 L10.800 11.300 M10.800 2.700 L2.200 11.300" stroke="#cfcfcd" stroke-width="3.200" transform="translate(0.900,0.900)"/><path d="M2.200 2.200 L10.800 10.800 M10.800 2.200 L2.200 10.800" stroke="#8b8d89" stroke-width="3.200"/></svg>
<svg class="abs" style="left:762px;top:539px" width="16" height="16" viewBox="0 0 16 16"><path d="M13.69 6.09 L15.49 6.69 L15.49 9.31 L13.69 9.91 L13.37 10.67 L14.22 12.37 L12.37 14.22 L10.67 13.37 L9.91 13.69 L9.31 15.49 L6.69 15.49 L6.09 13.69 L5.33 13.37 L3.63 14.22 L1.78 12.37 L2.63 10.67 L2.31 9.91 L0.51 9.31 L0.51 6.69 L2.31 6.09 L2.63 5.33 L1.78 3.63 L3.63 1.78 L5.33 2.63 L6.09 2.31 L6.69 0.51 L9.31 0.51 L9.91 2.31 L10.67 2.63 L12.37 1.78 L14.22 3.63 L13.37 5.33 Z M8.00 5.00 a3.00 3.00 0 1 0 0.01 0 Z" fill="url(#gGear)" fill-rule="evenodd" stroke="#1560c8" stroke-width="0.600" stroke-linejoin="round" transform="rotate(22 8 8)"/></svg>
<div class="t ui" id="tdbg" style="left:781.5px;top:540.6px;transform:scaleX(0.900);transform-origin:0 0;">Debugger</div>
<!--LOGS-END-->
<!--TERM-START-->
<!-- TERMINAL WINDOW -->
<div id="term" class="abs">
 <div class="abs" style="left:0;top:0;width:499px;height:36px;background:linear-gradient(#f6f6f5,#f1f1f0);border-bottom:1px solid #b0b1af;"></div>
 <div class="t" id="ttitle" style="left:5.3px;top:10.4px;font-size:15.800px;-webkit-text-stroke:0.7px #2e3436;color:#2e3436;transform:scaleX(0.968);transform-origin:0 0;">/home/msantos/Documentos/c++/programas_cpp/apunt...</div>
 <svg class="abs" style="left:400px;top:8px" width="95" height="22" viewBox="0 0 95 22"><rect x="9" y="11.500" width="8" height="2.600" fill="#2e3436"/><rect x="44" y="7" width="6" height="6" fill="none" stroke="#2e3436" stroke-width="2"/><path d="M77.700 6.700 L84.800 13.800 M84.800 6.700 L77.700 13.800" stroke="#2e3436" stroke-width="2.200" fill="none"/></svg>
 <div class="abs" style="left:0;top:37px;width:499px;height:317px;background:#fff;"></div>
 <div class="abs" style="left:1px;top:37px;width:13px;height:317px;background-color:#fff;background-image:linear-gradient(45deg,#000 25%,transparent 25%,transparent 75%,#000 75%),linear-gradient(45deg,#000 25%,transparent 25%,transparent 75%,#000 75%);background-size:2px 2px;background-position:0 0,1px 1px;"></div>
 <div class="abs" style="left:14px;top:37px;width:1px;height:317px;background:#000;"></div>
 <div class="abs" id="termtext" style="left:17px;top:40px;">Cuantos libros desea ingresar? 3
Por favor ingrese la siguiente información de los Libros:

******* Libro 1********:
Titulo: C++
Autor: fco. ceballos

******* Libro 2********:
Titulo: Java
Autor: Tenenbaum

******* Libro 3********:
Titulo: c/c++
Autor: rama

Process returned 0 (0x0)   execution time : 53.725 s
Press ENTER to continue.</div>
 <div class="abs" style="left:17px;top:261px;width:6px;height:12px;background:#000;"></div>
</div>
<!--TERM-END-->
</div>
</body>
</html>
